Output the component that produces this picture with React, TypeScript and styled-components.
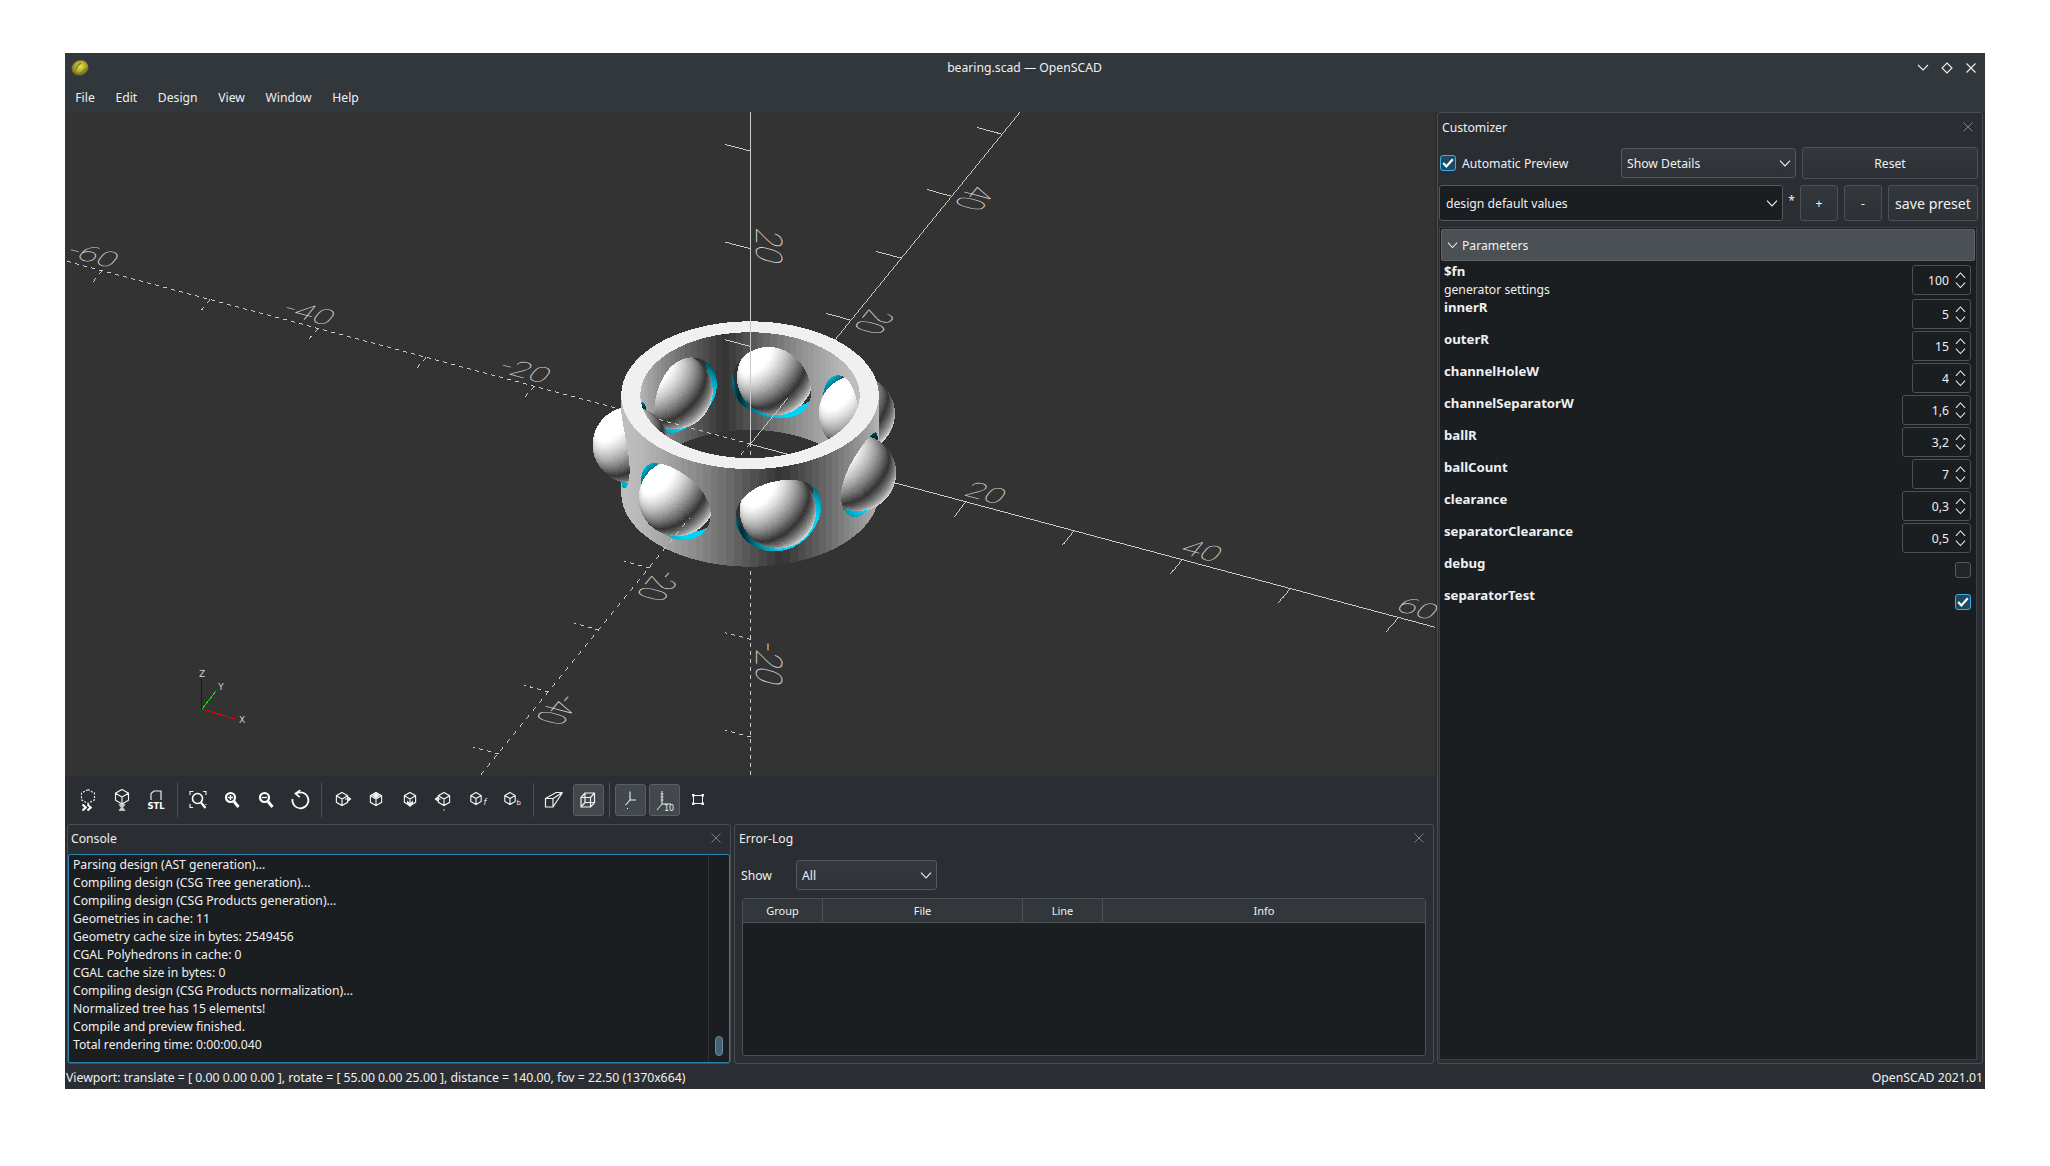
import React, { useMemo } from 'react';
import styled, { createGlobalStyle } from 'styled-components';

const GlobalStyle = createGlobalStyle`
  html, body {
    margin: 0;
    background: #fff;
  }
  * {
    box-sizing: border-box;
  }
`;

const Win = styled.div`
  margin: 53px 0 77px 65px;
  width: 1920px;
  height: 1036px;
  display: flex;
  flex-direction: column;
  background: #2a2e32;
  color: #eff0f1;
  font: 12.2px/18px 'Noto Sans', 'DejaVu Sans', sans-serif;
`;

const TitleBar = styled.div`
  height: 30px;
  flex: none;
  background: #32373b;
  display: grid;
  grid-template-columns: 1fr auto 1fr;
  align-items: center;
  padding: 0 6px 0 5px;
`;

const WinButtons = styled.div`
  display: flex;
  justify-content: flex-end;
  gap: 8px;
`;

const MenuBar = styled.div`
  height: 29px;
  flex: none;
  background: #32373b;
  display: flex;
  align-items: center;
`;

const MenuItem = styled.div`
  padding: 0 10.3px;
`;

const Main = styled.div`
  flex: 1;
  min-height: 0;
  display: flex;
`;

const LeftColumn = styled.div`
  width: 1372px;
  flex: none;
  display: flex;
  flex-direction: column;
`;

const ViewportFrame = styled.div`
  width: 1370px;
  height: 664px;
  flex: none;
  background: #333333;
`;

const ViewportCanvas = styled.svg`
  display: block;
  overflow: visible;
`;

const Toolbar = styled.div`
  height: 48px;
  flex: none;
  display: flex;
  align-items: center;
  padding-left: 6px;
`;

const ToolButton = styled.div<{ $active?: boolean }>`
  width: ${p => (p.$active ? 31 : 34)}px;
  height: 32px;
  flex: none;
  margin: 0 ${p => (p.$active ? 1.5 : 0)}px;
  display: flex;
  align-items: center;
  justify-content: center;
  border-radius: 3px;
  ${p =>
    p.$active
      ? 'background: #43484d; border: 1px solid #5b5f63;'
      : 'border: 1px solid transparent;'}
`;

const ToolSep = styled.div`
  width: 1px;
  height: 34px;
  flex: none;
  margin: 0 3.5px;
  background: #4d5054;
`;

const Docks = styled.div`
  flex: 1;
  min-height: 0;
  display: flex;
  gap: 3px;
  padding-left: 2px;
`;

const Dock = styled.div<{ $w: number }>`
  width: ${p => p.$w}px;
  flex: none;
  display: flex;
  flex-direction: column;
  border: 1px solid #4a4e52;
  border-radius: 3px;
  background: #2a2e32;
`;

const DockTitle = styled.div<{ $h: number; $pl: number }>`
  height: ${p => p.$h}px;
  flex: none;
  display: flex;
  align-items: center;
  justify-content: space-between;
  padding: 0 9px 1px ${p => p.$pl}px;
`;

const CloseWrap = styled.span`
  display: flex;
  margin-bottom: 2px;
`;

const ConsoleView = styled.div`
  flex: 1;
  min-height: 0;
  display: flex;
  border: 1px solid #2b80ae;
  border-radius: 2px;
  background: #1b1e20;
`;

const ConsoleText = styled.div`
  flex: 1;
  padding: 1px 4px 0;
`;

const ScrollTrack = styled.div`
  width: 21px;
  flex: none;
  border-left: 1px solid #2e3236;
  display: flex;
  align-items: flex-end;
  justify-content: center;
  padding-bottom: 6px;
`;

const ScrollThumb = styled.div`
  width: 8px;
  height: 20px;
  border-radius: 4px;
  background: #3f6379;
  border: 1px solid #6f8da0;
`;

const ShowRow = styled.div`
  display: flex;
  align-items: center;
  height: 30px;
  margin: 6px 0 8px;
  padding-left: 6px;
`;

const ShowLabel = styled.div`
  width: 55px;
  padding-top: 1px;
`;

const Combo = styled.div<{ $w: number; $h?: number; $dark?: boolean }>`
  width: ${p => p.$w}px;
  height: ${p => p.$h ?? 30}px;
  flex: none;
  display: flex;
  align-items: center;
  justify-content: space-between;
  padding: 1px 4px 0 ${p => (p.$dark ? 6 : 5)}px;
  border: 1px solid #55585c;
  border-radius: 3px;
  background: ${p => (p.$dark ? '#1b1e20' : 'linear-gradient(#35393e, #2e3236)')};
`;

const Table = styled.div`
  margin: 0 7px;
  height: 158px;
  display: flex;
  flex-direction: column;
  border: 1px solid #4d5054;
  border-radius: 3px;
  background: #1b1e20;
  overflow: hidden;
`;

const TableHead = styled.div`
  height: 24px;
  flex: none;
  display: flex;
  background: #32373b;
  border-bottom: 1px solid #4d5054;
  font-size: 11px;
`;

const HeadCell = styled.div<{ $w?: number }>`
  ${p => (p.$w ? `width: ${p.$w}px; flex: none; border-right: 1px solid #4d5054;` : 'flex: 1;')}
  text-align: center;
  line-height: 23px;
`;

const Customizer = styled.div`
  width: 546px;
  flex: none;
  display: flex;
  flex-direction: column;
  border: 1px solid #4a4e52;
  border-radius: 3px;
  background: #2a2e32;
`;

const OptionsRow = styled.div`
  height: 32px;
  flex: none;
  margin-top: 4px;
  display: flex;
  align-items: center;
  padding-left: 2px;
`;

const AutoPreview = styled.div`
  width: 181px;
  flex: none;
  display: flex;
  align-items: center;
  gap: 6px;
`;

const AutoLabel = styled.span`
  padding-top: 1px;
`;

const Check = styled.div<{ $on?: boolean; $mt?: number }>`
  width: 16px;
  height: 16px;
  flex: none;
  margin-top: ${p => p.$mt ?? 0}px;
  border-radius: 3px;
  border: 1px solid ${p => (p.$on ? '#3daee9' : '#55585c')};
  background: ${p => (p.$on ? '#1f4a63' : '#232629')};
  display: flex;
  align-items: center;
  justify-content: center;
`;

const PushButton = styled.div<{ $w: number; $h?: number; $fs?: number; $ml?: number }>`
  width: ${p => p.$w}px;
  height: ${p => p.$h ?? 36}px;
  flex: none;
  margin-left: ${p => p.$ml ?? 0}px;
  padding-top: 1px;
  display: flex;
  align-items: center;
  justify-content: center;
  font-size: ${p => p.$fs ?? 12.2}px;
  border: 1px solid #4d5054;
  border-radius: 3px;
  background: linear-gradient(#33383c, #2d3135);
`;

const PresetRow = styled.div`
  height: 36px;
  flex: none;
  margin-top: 6px;
  display: flex;
  align-items: center;
  padding-left: 1px;
`;

const Asterisk = styled.div`
  width: 17px;
  flex: none;
  text-align: center;
  margin-top: -4px;
`;

const ParamFrame = styled.div`
  flex: 1;
  min-height: 0;
  margin: 6px 5px 3px 1px;
  padding: 1px;
  border: 1px solid #3c4044;
  background: #1b1e20;
`;

const GroupHeader = styled.div`
  height: 32px;
  display: flex;
  align-items: center;
  gap: 4px;
  padding: 1px 0 0 5px;
  background: #4b5054;
  border: 1px solid #5f6367;
  border-radius: 2px;
`;

const ParamList = styled.div`
  padding: 1px 4px 0 3px;
`;

const ParamRow = styled.div<{ $tall?: boolean }>`
  height: ${p => (p.$tall ? 36 : 32)}px;
  display: flex;
  justify-content: space-between;
  align-items: flex-start;
`;

const ParamName = styled.div`
  font-weight: 700;
  font-size: 13.2px;
`;

const ParamNote = styled.div`
  margin-top: 1px;
`;

const Spin = styled.div<{ $w: number; $mt: number }>`
  width: ${p => p.$w}px;
  height: 30px;
  flex: none;
  margin-top: ${p => p.$mt}px;
  display: flex;
  align-items: center;
  justify-content: flex-end;
  gap: 6px;
  padding: 1px 4px 0 0;
  border: 1px solid #4d5054;
  border-radius: 3px;
`;

const SpinArrows = styled.div`
  display: flex;
  flex-direction: column;
  gap: 3px;
  margin-top: -1px;
`;

const StatusBar = styled.div`
  height: 25px;
  flex: none;
  display: flex;
  align-items: center;
  justify-content: space-between;
  padding: 3px 2px 0 1px;
  font-size: 12.25px;
`;

// --- viewport: the model is ray cast once into per colour pixel paths

const rad = Math.PI / 180;
const S = 11.92;
const CX = 685;
const CY = 332;
const c25 = Math.cos(25 * rad);
const s25 = Math.sin(25 * rad);
const c55 = Math.cos(55 * rad);
const s55 = Math.sin(55 * rad);
type V = [number, number, number];
const EX: V = [c25, s25, 0];
const EY: V = [-s25 * c55, c25 * c55, s55];
const EZ: V = [s25 * s55, -c25 * s55, c55];
const dot = (a: V, b: V) => a[0] * b[0] + a[1] * b[1] + a[2] * b[2];

const project = (p: V) => ({
  x: CX + S * dot(p, EX),
  y: CY - S * dot(p, EY),
  t: dot(p, EZ)
});

const AMBIENT = 0.2;
const DIFFUSE = 0.92;
const BALL_R = 3.2;
const HOLE_R = 3.7;
const RING_O = 10.8;
const RING_I = 9.2;
const RING_Z = 5;
const balls: V[] = Array.from({ length: 7 }, (_, i) => [
  10 * Math.cos((i * 360 * rad) / 7),
  10 * Math.sin((i * 360 * rad) / 7),
  0
]);

const shade = (n: V) => {
  const l = (-dot(n, EX) + dot(n, EY) + dot(n, EZ)) / Math.sqrt(3);
  return Math.min(1, AMBIENT + DIFFUSE * Math.abs(l));
};

const hex = (v: number) => Math.round(v).toString(16).padStart(2, '0');

const inRing = (p: V) => {
  const r = Math.hypot(p[0], p[1]);
  if (r < RING_I || r > RING_O || Math.abs(p[2]) > RING_Z) return false;
  for (const b of balls) {
    if (Math.hypot(p[0] - b[0], p[1] - b[1], p[2] - b[2]) < HOLE_R) return false;
  }
  return true;
};

const facet = (p: V): V => {
  const q = (Math.floor(Math.atan2(p[1], p[0]) / (3.6 * rad)) + 0.5) * 3.6 * rad;
  return [Math.cos(q), Math.sin(q), 0];
};

function buildScene() {
  const BX = 515;
  const BY = 195;
  const BW = 330;
  const BH = 275;
  const depth = new Float32Array(BW * BH).fill(-1e9);
  const byColor = new Map<string, string>();
  const d = EZ;
  const add = (color: string, x: number, y: number, w: number) => {
    byColor.set(color, (byColor.get(color) || '') + `M${x} ${y}h${w}v1h-${w}z`);
  };

  for (let j = 0; j < BH; j++) {
    let run = '';
    let start = 0;
    for (let i = 0; i <= BW; i++) {
      let color = '';
      if (i < BW) {
        const X = (BX + i + 0.5 - CX) / S;
        const Y = (CY - (BY + j + 0.5)) / S;
        const o: V = [X * EX[0] + Y * EY[0], X * EX[1] + Y * EY[1], X * EX[2] + Y * EY[2]];
        const at = (t: number): V => [o[0] + t * d[0], o[1] + t * d[1], o[2] + t * d[2]];
        let best = -1e9;

        for (const c of balls) {
          const l: V = [o[0] - c[0], o[1] - c[1], o[2] - c[2]];
          const b = dot(l, d);
          const disc = b * b - dot(l, l) + BALL_R * BALL_R;
          if (disc < 0) continue;
          const t = -b + Math.sqrt(disc);
          if (t > best) {
            best = t;
            const p = at(t);
            const nz = (p[2] - c[2]) / BALL_R;
            const lat = (Math.floor(Math.asin(nz) / (3.6 * rad)) + 0.5) * 3.6 * rad;
            const lon =
              (Math.floor(Math.atan2(p[1] - c[1], p[0] - c[0]) / (3.6 * rad)) + 0.5) * 3.6 * rad;
            const g = hex(255 * shade([Math.cos(lat) * Math.cos(lon), Math.cos(lat) * Math.sin(lon), Math.sin(lat)]));
            color = `#${g}${g}${g}`;
          }
        }

        const cands: { t: number; k: number; c?: V }[] = [];
        const A = d[0] * d[0] + d[1] * d[1];
        const B = o[0] * d[0] + o[1] * d[1];
        const rr = o[0] * o[0] + o[1] * o[1];
        [RING_O, RING_I].forEach((R, k) => {
          const disc = B * B - A * (rr - R * R);
          if (disc >= 0) {
            const q = Math.sqrt(disc);
            cands.push({ t: (-B + q) / A, k }, { t: (-B - q) / A, k });
          }
        });
        cands.push({ t: (RING_Z - o[2]) / d[2], k: 2 }, { t: (-RING_Z - o[2]) / d[2], k: 2 });
        for (const c of balls) {
          const l: V = [o[0] - c[0], o[1] - c[1], o[2] - c[2]];
          const b = dot(l, d);
          const disc = b * b - dot(l, l) + HOLE_R * HOLE_R;
          if (disc >= 0) {
            const q = Math.sqrt(disc);
            cands.push({ t: -b + q, k: 3, c }, { t: -b - q, k: 3, c });
          }
        }
        cands.sort((a, b) => b.t - a.t);
        for (const h of cands) {
          if (h.t <= best) break;
          if (!inRing(at(h.t - 1e-3))) continue;
          best = h.t;
          const p = at(h.t);
          if (h.k === 3 && h.c) {
            const v = shade([(p[0] - h.c[0]) / HOLE_R, (p[1] - h.c[1]) / HOLE_R, (p[2] - h.c[2]) / HOLE_R]);
            color = `#00${hex(212 * v)}${hex(246 * v)}`;
          } else {
            const g = hex(255 * shade(h.k === 2 ? [0, 0, Math.sign(p[2])] : facet(p)));
            color = `#${g}${g}${g}`;
          }
          break;
        }
        if (best > -1e8) depth[j * BW + i] = best;
      }
      if (color !== run) {
        if (run) add(run, BX + start, BY + j, i - start);
        run = color;
        start = i;
      }
    }
  }

  // axes and ticks are 1px aliased lines with a depth test against the model
  let lines = '';
  const line = (a: V, b: V, dashed: boolean) => {
    const p = project(a);
    const q = project(b);
    const n = Math.ceil(Math.max(Math.abs(q.x - p.x), Math.abs(q.y - p.y)));
    for (let s = 0; s <= n; s++) {
      if (dashed && s % 8 >= 4) continue;
      const x = Math.floor(p.x + ((q.x - p.x) * s) / n);
      const y = Math.floor(p.y + ((q.y - p.y) * s) / n);
      if (x < 0 || y < 0 || x >= 1370 || y >= 664) continue;
      const t = p.t + ((q.t - p.t) * s) / n;
      const bi = x - BX;
      const bj = y - BY;
      if (bi >= 0 && bj >= 0 && bi < BW && bj < BH && depth[bj * BW + bi] > t) continue;
      lines += `M${x} ${y}h1v1h-1z`;
    }
  };
  const L = 90;
  line([0, 0, 0], [L, 0, 0], false);
  line([0, 0, 0], [0, L, 0], false);
  line([0, 0, 0], [0, 0, L], false);
  line([0, 0, 0], [-L, 0, 0], true);
  line([0, 0, 0], [0, -L, 0], true);
  line([0, 0, 0], [0, 0, -L], true);
  for (let v = -80; v <= 80; v += 10) {
    if (v === 0) continue;
    line([v, 0, 0], [v, -2.3, 0], v < 0);
    line([0, v, 0], [-2.25, v, 0], v < 0);
    line([0, 0, v], [-2.25, 0, v], v < 0);
  }
  return { pixels: Array.from(byColor.entries()), lines };
}

const F = 0.31;
const FV = 0.34;
const onX = [S * c25 * F, S * s25 * c55 * F, -S * s25 * F, S * c25 * c55 * F];
const onY = [-S * s25 * F, S * c25 * c55 * F, -S * c25 * FV, -S * s25 * c55 * FV];
const onZ = [0, S * s55 * F, -S * c25 * FV, -S * s25 * c55 * FV];

const axisLabels = [
  ...[20, 40, 60].map(v => ({ text: `${v}`, m: onX, p: project([v, 0, 0]), dx: -4, dy: -7 })),
  ...[-20, -40, -60].map(v => ({ text: `${v}`, m: onX, p: project([v, 0, 0]), dx: -37, dy: -15 })),
  ...[20, 40].map(v => ({ text: `${v}`, m: onY, p: project([0, v, 0]), dx: 19, dy: -12 })),
  ...[-20, -40].map(v => ({ text: `${v}`, m: onY, p: project([0, v, 0]), dx: 8, dy: 1 })),
  { text: '20', m: onZ, p: project([0, 0, 20]), dx: 6, dy: -22 },
  { text: '-20', m: onZ, p: project([0, 0, -20]), dx: 6, dy: 0 }
];

function Viewport() {
  const scene = useMemo(buildScene, []);
  return (
    <ViewportFrame>
      <ViewportCanvas width={1370} height={664} shapeRendering="crispEdges">
        {scene.pixels.map(([color, d]) => (
          <path key={color} d={d} fill={color} />
        ))}
        <path d={scene.lines} fill="#c9c9c9" />
        <g fontFamily="Roboto, sans-serif" fontWeight={100} fontSize={10} fill="#d4d4d4" textRendering="geometricPrecision">
          {axisLabels.map(l => (
            <text
              key={l.text + l.m[0] + l.m[2]}
              transform={`matrix(${l.m.join(' ')} ${l.p.x + l.dx} ${l.p.y + l.dy})`}
            >
              {l.text}
            </text>
          ))}
        </g>
        <line x1={137} y1={597} x2={136} y2={567} stroke="#0000e0" />
        <line x1={137} y1={597} x2={151} y2={579} stroke="#00ee00" />
        <line x1={137} y1={597} x2={170} y2={607} stroke="#ee0000" />
        <g fontFamily="'DejaVu Sans', sans-serif" fontSize={9} fill="#cfcfcf" textAnchor="middle">
          <text x={137} y={565}>Z</text>
          <text x={156} y={578}>Y</text>
          <text x={177} y={611}>X</text>
        </g>
      </ViewportCanvas>
    </ViewportFrame>
  );
}

// --- small widgets

const Chevron = ({ up, size = 12, color = '#eff0f1' }: { up?: boolean; size?: number; color?: string }) => (
  <svg width={size} height={size / 2 + 1} viewBox="0 0 12 7" fill="none" stroke={color} strokeWidth={1.1}>
    <path d={up ? 'M1 6.3 6 1l5 5.3' : 'M1 .7 6 6l5-5.3'} />
  </svg>
);

const CloseX = ({ color = '#7d8185', size = 10 }: { color?: string; size?: number }) => (
  <CloseWrap>
    <svg width={size} height={size} viewBox="0 0 10 10" stroke={color} strokeWidth={1}>
      <path d="M.5.5l9 9M9.5.5l-9 9" />
    </svg>
  </CloseWrap>
);

const Tick = () => (
  <svg width={12} height={10} viewBox="0 0 12 10" fill="none" stroke="#fff" strokeWidth={2.2}>
    <path d="M1.2 5l3.2 3.4L10.8 1.3" />
  </svg>
);

const Logo = () => (
  <svg width={20} height={18} viewBox="0 0 20 18">
    <defs>
      <radialGradient id="logo" cx="0.55" cy="0.42" r="0.6">
        <stop offset="0" stopColor="#f2e23a" />
        <stop offset="0.55" stopColor="#b5a52a" />
        <stop offset="1" stopColor="#5b4a26" />
      </radialGradient>
    </defs>
    <ellipse cx={10} cy={9} rx={8.6} ry={7.6} fill="url(#logo)" transform="rotate(-25 10 9)" />
    <path d="M4 13c2-3 3-7 7-9M9 15c3-1 5-3 7-6" stroke="#6d8f2f" strokeWidth={1.4} fill="none" />
  </svg>
);

const ic = { fill: 'none', stroke: '#eff0f1', strokeWidth: 1.15 };
const bold = { fill: 'none', stroke: '#fff', strokeWidth: 2.1 };
const hexCube = 'M12 4.5l5.6 3.2v6.6L12 17.5l-5.6-3.2V7.7zM6.4 7.7 12 11l5.6-3.3M12 11v6.5';
const smallCube = 'M10 4.5l5.2 3v6L10 16.5l-5.2-3v-6zM4.8 7.5 10 10.5l5.2-3M10 10.5v6';

const Icon = ({ children }: { children: React.ReactNode }) => (
  <svg width={24} height={24} viewBox="0 0 24 24">{children}</svg>
);

const toolIcons: Record<string, React.ReactNode> = {
  preview: (
    <>
      <path d="M12 1.5l6.5 3.7v6.6L12 15.5l-6.5-3.7V5.2z" {...ic} strokeDasharray="2 1.4" />
      <path d="M6.5 16.5l3.2 3-3.2 3M11.5 16.5l3.2 3-3.2 3" {...bold} />
    </>
  ),
  render: (
    <>
      <path d="M12 1.5l6.5 3.7v7L12 16l-6.5-3.8v-7zM5.5 5.2 12 9l6.5-3.8M12 9v7" {...ic} />
      <path d="M9 16.5h6l-2.2 3 2.2 3H9l2.2-3z" fill="#bfc2c4" stroke="#eff0f1" strokeWidth={0.6} />
    </>
  ),
  stl: (
    <>
      <path d="M7 12V5.5L10 3h7v9" {...ic} />
      <text x={12} y={21} textAnchor="middle" fontFamily="'DejaVu Sans', sans-serif" fontWeight={700} fontSize={8.4} fill="#fff">STL</text>
    </>
  ),
  all: (
    <>
      <path d="M4 7V3.5h3.5M17 3.5h3V7M4 16v3.5h3M20 16v1" {...ic} />
      <circle cx={11.5} cy={10.5} r={5} fill="none" stroke="#fff" strokeWidth={1.6} />
      <path d="M15 14.5l4.5 5.5" {...bold} />
    </>
  ),
  zoomIn: (
    <>
      <circle cx={10.5} cy={9.5} r={4.5} fill="none" stroke="#fff" strokeWidth={2.2} />
      <path d="M14 13.5l4.5 5.5" {...bold} strokeWidth={2.8} />
      <path d="M8 9.5h5M10.5 7v5" stroke="#fff" strokeWidth={1.3} />
    </>
  ),
  zoomOut: (
    <>
      <circle cx={10.5} cy={9.5} r={4.5} fill="none" stroke="#fff" strokeWidth={2.2} />
      <path d="M14 13.5l4.5 5.5" {...bold} strokeWidth={2.8} />
      <path d="M8 9.5h5" stroke="#fff" strokeWidth={1.3} />
    </>
  ),
  reset: (
    <>
      <path d="M8.2 5.5A8 8 0 1 1 4.5 11" fill="none" stroke="#fff" strokeWidth={1.7} />
      <path d="M12.2 2.2 7.5 5.6l4.2 3.6" fill="none" stroke="#fff" strokeWidth={1.7} />
    </>
  ),
  right: (
    <>
      <path d={hexCube} {...ic} />
      <path d="M15 11h5M18 9l2.5 2-2.5 2" stroke="#fff" strokeWidth={1.2} fill="none" />
    </>
  ),
  top: (
    <>
      <path d={hexCube} {...ic} />
      <path d="M12 4.5l4 3-4 3-4-3z" fill="#eff0f1" />
    </>
  ),
  bottom: (
    <>
      <path d={hexCube} {...ic} />
      <path d="M12 15l3-2.5V16l-3 3-3-3v-3.5z" fill="#eff0f1" />
    </>
  ),
  left: (
    <>
      <path d={hexCube} {...ic} />
      <path d="M3.5 11h5M6 9l-2.5 2L6 13" stroke="#fff" strokeWidth={1.2} fill="none" />
      <path d="M11 22h2" stroke="#bfc2c4" />
    </>
  ),
  front: (
    <>
      <path d={smallCube} {...ic} />
      <text x={17.5} y={17} fontFamily="'DejaVu Sans', sans-serif" fontStyle="italic" fontSize={8} fill="#eff0f1">f</text>
    </>
  ),
  back: (
    <>
      <path d={smallCube} {...ic} />
      <text x={16.5} y={17} fontFamily="'DejaVu Sans', sans-serif" fontSize={7} fill="#eff0f1">b</text>
    </>
  ),
  perspective: (
    <path d="M3.5 10.5H11V19H3.5zM3.5 10.5 14 4.5h6.5M11 10.5l9.5-6M11 19l9.5-14.5" {...ic} strokeWidth={1.2} />
  ),
  ortho: (
    <path d="M5 9.5h9.5V19H5zM9 5h9.5v9.5H9zM5 9.5 9 5M14.5 9.5 18.5 5M14.5 19l4-4.5M5 19l4-4.5" {...ic} strokeWidth={1.2} />
  ),
  axes: (
    <>
      <path d="M12 3.5V12h6M12 12l-4.5 5" {...ic} strokeWidth={1.1} />
      <path d="M9 20.5h1" stroke="#eff0f1" />
    </>
  ),
  scale: (
    <>
      <path d="M10 3v13h9M10 16l-5 6" {...ic} strokeWidth={1} />
      <path d="M8.5 6h3M8.5 9h3M8.5 12h3" stroke="#eff0f1" strokeWidth={0.8} />
      <text x={12} y={23} fontFamily="'DejaVu Sans', sans-serif" fontSize={8} fill="#eff0f1">10</text>
    </>
  ),
  edges: (
    <>
      <path d="M7.5 7.5h9v8h-9z" {...ic} strokeWidth={1} />
      <path d="M6 6h2.5v2.5H6zM15.5 6H18v2.5h-2.5zM6 14.5h2.5V17H6zM15.5 14.5H18V17h-2.5z" fill="#eff0f1" />
    </>
  )
};

const toolGroups: { name: string; active?: boolean }[][] = [
  [{ name: 'preview' }, { name: 'render' }, { name: 'stl' }],
  [{ name: 'all' }, { name: 'zoomIn' }, { name: 'zoomOut' }, { name: 'reset' }],
  [{ name: 'right' }, { name: 'top' }, { name: 'bottom' }, { name: 'left' }, { name: 'front' }, { name: 'back' }],
  [{ name: 'perspective' }, { name: 'ortho', active: true }],
  [{ name: 'axes', active: true }, { name: 'scale', active: true }, { name: 'edges' }]
];

const consoleLines = [
  'Parsing design (AST generation)...',
  'Compiling design (CSG Tree generation)...',
  'Compiling design (CSG Products generation)...',
  'Geometries in cache: 11',
  'Geometry cache size in bytes: 2549456',
  'CGAL Polyhedrons in cache: 0',
  'CGAL cache size in bytes: 0',
  'Compiling design (CSG Products normalization)...',
  'Normalized tree has 15 elements!',
  'Compile and preview finished.',
  'Total rendering time: 0:00:00.040'
];

const params: { name: string; value?: string; wide?: boolean; checked?: boolean; note?: string }[] = [
  { name: '$fn', value: '100', note: 'generator settings' },
  { name: 'innerR', value: '5' },
  { name: 'outerR', value: '15' },
  { name: 'channelHoleW', value: '4' },
  { name: 'channelSeparatorW', value: '1,6', wide: true },
  { name: 'ballR', value: '3,2', wide: true },
  { name: 'ballCount', value: '7' },
  { name: 'clearance', value: '0,3', wide: true },
  { name: 'separatorClearance', value: '0,5', wide: true },
  { name: 'debug', checked: false },
  { name: 'separatorTest', checked: true }
];

export default function App() {
  return (
    <>
      <GlobalStyle />
      <Win>
        <TitleBar>
          <Logo />
          <div>bearing.scad — OpenSCAD</div>
          <WinButtons>
            <svg width={16} height={12} viewBox="0 0 16 12" fill="none" stroke="#eff0f1" strokeWidth={1.1}>
              <path d="M3 3l5 5 5-5" />
            </svg>
            <svg width={16} height={12} viewBox="0 0 16 12" fill="none" stroke="#eff0f1" strokeWidth={1.1}>
              <path d="M8 1l5 5-5 5-5-5z" />
            </svg>
            <svg width={16} height={12} viewBox="0 0 16 12" fill="none" stroke="#eff0f1" strokeWidth={1.1}>
              <path d="M3.5 1.5l9 9M12.5 1.5l-9 9" />
            </svg>
          </WinButtons>
        </TitleBar>
        <MenuBar>
          {['File', 'Edit', 'Design', 'View', 'Window', 'Help'].map(m => (
            <MenuItem key={m}>{m}</MenuItem>
          ))}
        </MenuBar>
        <Main>
          <LeftColumn>
            <Viewport />
            <Toolbar>
              {toolGroups.map((group, g) => (
                <React.Fragment key={g}>
                  {g > 0 && <ToolSep />}
                  {group.map(t => (
                    <ToolButton key={t.name} $active={t.active}>
                      <Icon>{toolIcons[t.name]}</Icon>
                    </ToolButton>
                  ))}
                </React.Fragment>
              ))}
            </Toolbar>
            <Docks>
              <Dock $w={664}>
                <DockTitle $h={29} $pl={3}>
                  <span>Console</span>
                  <CloseX />
                </DockTitle>
                <ConsoleView>
                  <ConsoleText>
                    {consoleLines.map(l => (
                      <div key={l}>{l}</div>
                    ))}
                  </ConsoleText>
                  <ScrollTrack>
                    <ScrollThumb />
                  </ScrollTrack>
                </ConsoleView>
              </Dock>
              <Dock $w={700}>
                <DockTitle $h={29} $pl={4}>
                  <span>Error-Log</span>
                  <CloseX />
                </DockTitle>
                <ShowRow>
                  <ShowLabel>Show</ShowLabel>
                  <Combo $w={141}>
                    All
                    <Chevron />
                  </Combo>
                </ShowRow>
                <Table>
                  <TableHead>
                    <HeadCell $w={80}>Group</HeadCell>
                    <HeadCell $w={200}>File</HeadCell>
                    <HeadCell $w={80}>Line</HeadCell>
                    <HeadCell>Info</HeadCell>
                  </TableHead>
                </Table>
              </Dock>
            </Docks>
          </LeftColumn>
          <Customizer>
            <DockTitle $h={30} $pl={4}>
              <span>Customizer</span>
              <CloseX />
            </DockTitle>
            <OptionsRow>
              <AutoPreview>
                <Check $on>
                  <Tick />
                </Check>
                <AutoLabel>Automatic Preview</AutoLabel>
              </AutoPreview>
              <Combo $w={175}>
                Show Details
                <Chevron />
              </Combo>
              <PushButton $w={176} $h={32} $ml={6}>
                Reset
              </PushButton>
            </OptionsRow>
            <PresetRow>
              <Combo $w={344} $h={36} $dark>
                design default values
                <Chevron />
              </Combo>
              <Asterisk>*</Asterisk>
              <PushButton $w={38}>+</PushButton>
              <PushButton $w={38} $ml={6}>
                -
              </PushButton>
              <PushButton $w={90} $fs={14.2} $ml={6}>
                save preset
              </PushButton>
            </PresetRow>
            <ParamFrame>
              <GroupHeader>
                <Chevron size={11} />
                Parameters
              </GroupHeader>
              <ParamList>
                {params.map((p, i) => (
                  <ParamRow key={p.name} $tall={i === 0}>
                    <div>
                      <ParamName>{p.name}</ParamName>
                      {p.note && <ParamNote>{p.note}</ParamNote>}
                    </div>
                    {p.value !== undefined ? (
                      <Spin $w={p.wide ? 69 : 59} $mt={i === 0 ? 3 : 1}>
                        {p.value}
                        <SpinArrows>
                          <Chevron up size={11} />
                          <Chevron size={11} />
                        </SpinArrows>
                      </Spin>
                    ) : (
                      <Check $on={p.checked} $mt={8}>
                        {p.checked && <Tick />}
                      </Check>
                    )}
                  </ParamRow>
                ))}
              </ParamList>
            </ParamFrame>
          </Customizer>
        </Main>
        <StatusBar>
          <span>
            Viewport: translate = [ 0.00 0.00 0.00 ], rotate = [ 55.00 0.00 25.00 ], distance = 140.00, fov = 22.50 (1370x664)
          </span>
          <span>OpenSCAD 2021.01</span>
        </StatusBar>
      </Win>
    </>
  );
}
